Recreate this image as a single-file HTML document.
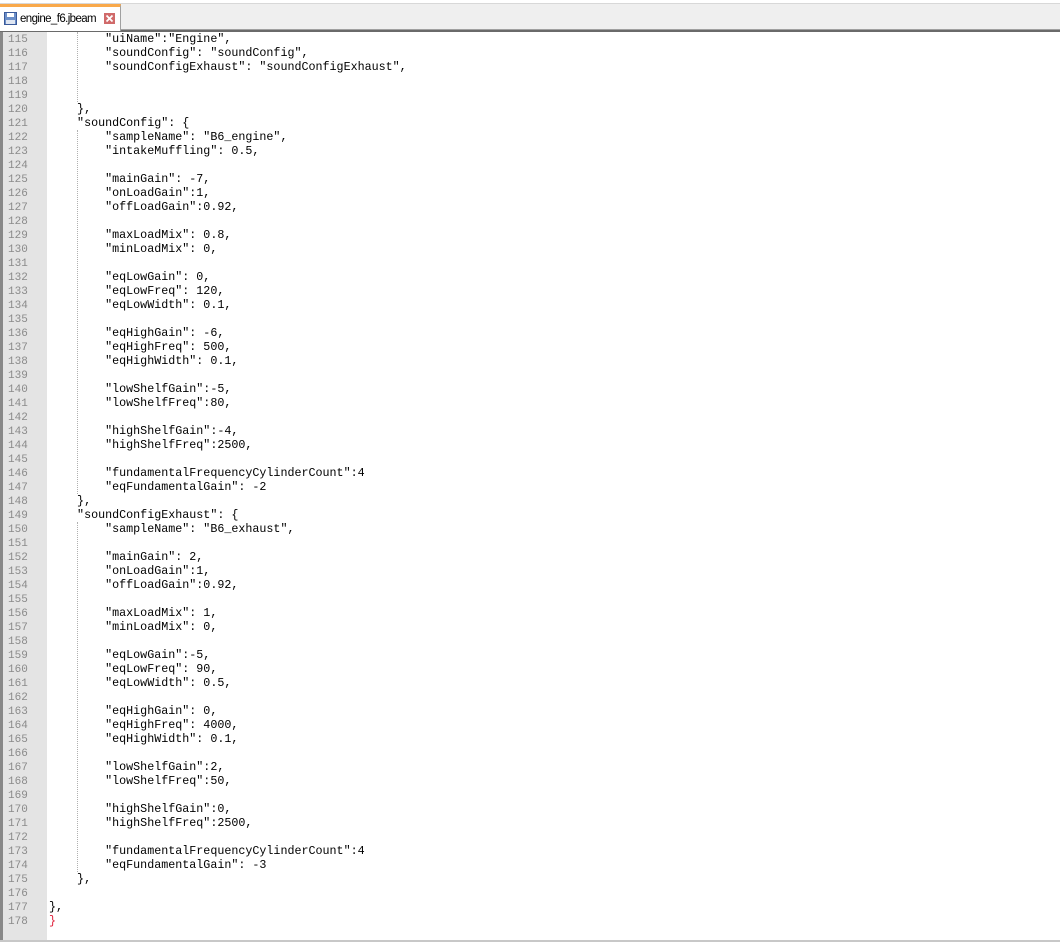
<!DOCTYPE html><html><head><style>
body{margin:0;width:1060px;height:942px;background:#fff;overflow:hidden;position:relative;font-family:"Liberation Mono",monospace}
.bar{position:absolute;left:0;top:3px;width:1060px;height:25px;background:#efefef;border-top:1px solid #d8d8d8}
.sep{position:absolute;left:0;top:29px;width:1060px;height:1px;background:#a0a0a0}
.sep2{position:absolute;left:0;top:30px;width:1060px;height:2px;background:#6a6a6a}
.tab{position:absolute;left:0;top:4px;width:121px;height:27px;background:#fff;border-right:1px solid #a0a0a0;border-top:3px solid #f9a94b;box-sizing:border-box}
.tab span{position:absolute;left:20px;top:6px;font:11.5px "Liberation Sans",sans-serif;color:#000;letter-spacing:-0.6px}
.gut{position:absolute;left:0;top:32px;width:47px;height:908px;background:#e4e4e4;border-left:3px solid #888;box-sizing:border-box}
.ln{position:absolute;left:8px;top:33px;font-size:11px;line-height:14px;color:#8a8a8a;white-space:pre}
.code{position:absolute;left:49px;top:32px;font-size:11.7px;line-height:14px;color:#000;white-space:pre}
.guide{position:absolute;left:77px;width:0;border-left:1px dotted #b0b0b0}
.bot{position:absolute;left:0;top:940px;width:1060px;height:2px;background:#c8c8c8}
</style></head><body>
<div class="bar"></div><div class="sep"></div><div class="sep2"></div>
<div class="tab">
<svg style="position:absolute;left:4px;top:5px" width="13" height="13"><rect x="0.5" y="0.5" width="12" height="12" fill="#6c8fc8" stroke="#3a5a9a"/><rect x="3" y="1" width="7" height="4" fill="#fff"/><rect x="2" y="8" width="9" height="4" fill="#dfe6f2"/></svg>
<span>engine_f6.jbeam</span>
<svg style="position:absolute;left:104px;top:6px" width="11" height="11"><rect width="11" height="11" fill="#d06a6a"/><path d="M2.5 2.5L8.5 8.5M8.5 2.5L2.5 8.5" stroke="#fff" stroke-width="1.8"/></svg>
</div>
<div class="gut"></div>
<div class="guide" style="top:32px;height:70px"></div>
<div class="guide" style="top:130px;height:364px"></div>
<div class="guide" style="top:522px;height:350px"></div>
<div class="ln">115
116
117
118
119
120
121
122
123
124
125
126
127
128
129
130
131
132
133
134
135
136
137
138
139
140
141
142
143
144
145
146
147
148
149
150
151
152
153
154
155
156
157
158
159
160
161
162
163
164
165
166
167
168
169
170
171
172
173
174
175
176
177
178</div>
<div class="code">        "uiName":"Engine",
        "soundConfig": "soundConfig",
        "soundConfigExhaust": "soundConfigExhaust",


    },
    "soundConfig": {
        "sampleName": "B6_engine",
        "intakeMuffling": 0.5,

        "mainGain": -7,
        "onLoadGain":1,
        "offLoadGain":0.92,

        "maxLoadMix": 0.8,
        "minLoadMix": 0,

        "eqLowGain": 0,
        "eqLowFreq": 120,
        "eqLowWidth": 0.1,

        "eqHighGain": -6,
        "eqHighFreq": 500,
        "eqHighWidth": 0.1,

        "lowShelfGain":-5,
        "lowShelfFreq":80,

        "highShelfGain":-4,
        "highShelfFreq":2500,

        "fundamentalFrequencyCylinderCount":4
        "eqFundamentalGain": -2
    },
    "soundConfigExhaust": {
        "sampleName": "B6_exhaust",

        "mainGain": 2,
        "onLoadGain":1,
        "offLoadGain":0.92,

        "maxLoadMix": 1,
        "minLoadMix": 0,

        "eqLowGain":-5,
        "eqLowFreq": 90,
        "eqLowWidth": 0.5,

        "eqHighGain": 0,
        "eqHighFreq": 4000,
        "eqHighWidth": 0.1,

        "lowShelfGain":2,
        "lowShelfFreq":50,

        "highShelfGain":0,
        "highShelfFreq":2500,

        "fundamentalFrequencyCylinderCount":4
        "eqFundamentalGain": -3
    },

},
<span style="color:#e0203a">}</span></div>
<div class="bot"></div>
</body></html>
